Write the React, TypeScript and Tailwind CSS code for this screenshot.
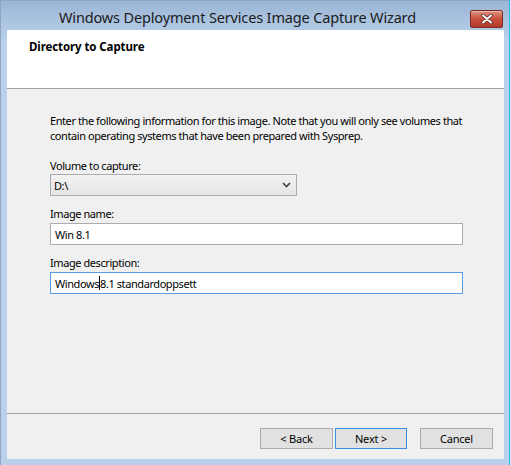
import React from "react";

const font = { fontFamily: '"Noto Sans", "Open Sans", Arial, sans-serif' };

function CloseButton() {
  return (
    <div className="mt-[9px] h-[18px] w-[33px] rounded-[2px] border border-[#7d2a20] bg-gradient-to-b from-[#dc9282] via-[#c9503d] to-[#b3382a] flex items-center justify-center shadow-[inset_0_1px_0_rgba(255,255,255,0.35)]">
      <svg width="12" height="10" viewBox="0 0 12 10">
        <path d="M2 1.5 L10 8.5 M10 1.5 L2 8.5" stroke="#5a2a24" strokeWidth="3.6" strokeLinecap="round" />
        <path d="M2 1.5 L10 8.5 M10 1.5 L2 8.5" stroke="#ffffff" strokeWidth="2" strokeLinecap="round" />
      </svg>
    </div>
  );
}

function WizardButton({ label, isDefault, className }: { label: string; isDefault?: boolean; className?: string }) {
  return (
    <button
      type="button"
      className={
        "h-[21px] bg-[#e1e1e1] text-[11px] tracking-[-0.2px] text-black leading-none " +
        (isDefault ? "border border-[#3c8ee0] " : "border border-[#adadad] ") +
        (className ?? "")
      }
      style={font}
    >
      {label}
    </button>
  );
}

export default function App() {
  return (
    <div className="w-[511px] h-[465px] flex bg-[#b9d1ea] overflow-hidden" style={font}>
      <div className="w-[509px] h-full flex flex-col border-l border-t border-[#8ea6c4] bg-gradient-to-b from-[#9bb6d6] via-[#b9d1ea] via-[40px] to-[#b9d1ea]">
        {/* Title bar */}
        <div className="h-[29px] flex shrink-0">
          <div className="flex-1 flex items-center justify-center pt-[4px] pl-[4px] text-[14.5px] tracking-[-0.15px] text-[#1b1b1b] whitespace-nowrap">
            Windows Deployment Services Image Capture Wizard
          </div>
          <div className="pr-[6px]">
            <CloseButton />
          </div>
        </div>

        {/* Client area */}
        <div className="ml-[6px] mr-[5px] h-[429px] flex flex-col bg-[#f0f0f0]">
          <div className="h-[59px] shrink-0 bg-white border-b border-[#a0a0a0] pl-[22px] pt-[9px]">
            <div className="text-[11.5px] tracking-[-0.1px] font-bold text-black leading-[16px]">Directory to Capture</div>
          </div>

          <div className="flex-1 flex flex-col pl-[43px] pt-[24px] text-[11px] tracking-[-0.42px] text-black leading-[15px]">
            <p className="whitespace-nowrap">
              Enter the following information for this image. Note that you will only see volumes that
              <br />
              contain operating systems that have been prepared with Sysprep.
            </p>

            <div className="mt-[15px]">Volume to capture:</div>
            <div className="mt-[1px] h-[22px] w-[247px] border border-[#acacac] bg-gradient-to-b from-[#f2f2f2] to-[#e5e5e5] flex items-center justify-between pl-[3px] pr-[5px]">
              <span>D:\</span>
              <svg width="9" height="6" viewBox="0 0 9 6">
                <path d="M1 1 L4.5 4.5 L8 1" stroke="#404040" strokeWidth="1.6" fill="none" />
              </svg>
            </div>

            <div className="mt-[10px]">Image name:</div>
            <div className="mt-[2px] h-[22px] w-[413px] border border-[#abadb3] bg-white flex items-center pl-[4px]">
              Win 8.1
            </div>

            <div className="mt-[10px]">Image description:</div>
            <div className="mt-[2px] h-[22px] w-[413px] border border-[#569de5] bg-white flex items-center pl-[4px]">
              <span>Windows</span>
              <span className="inline-block w-px h-[14px] bg-black" />
              <span>8.1 standardoppsett</span>
            </div>
          </div>

          <div className="h-[46px] shrink-0 border-t border-[#a0a0a0] flex items-start pt-[14px] pl-[253px]">
            <WizardButton label="< Back" className="w-[73px]" />
            <WizardButton label="Next >" isDefault className="ml-[2px] w-[72px]" />
            <WizardButton label="Cancel" className="ml-[13px] w-[73px]" />
          </div>
        </div>
      </div>
      <div className="w-px h-full bg-[#2fb8ef]" />
      <div className="w-px h-full bg-[#dbe8f5]" />
    </div>
  );
}
